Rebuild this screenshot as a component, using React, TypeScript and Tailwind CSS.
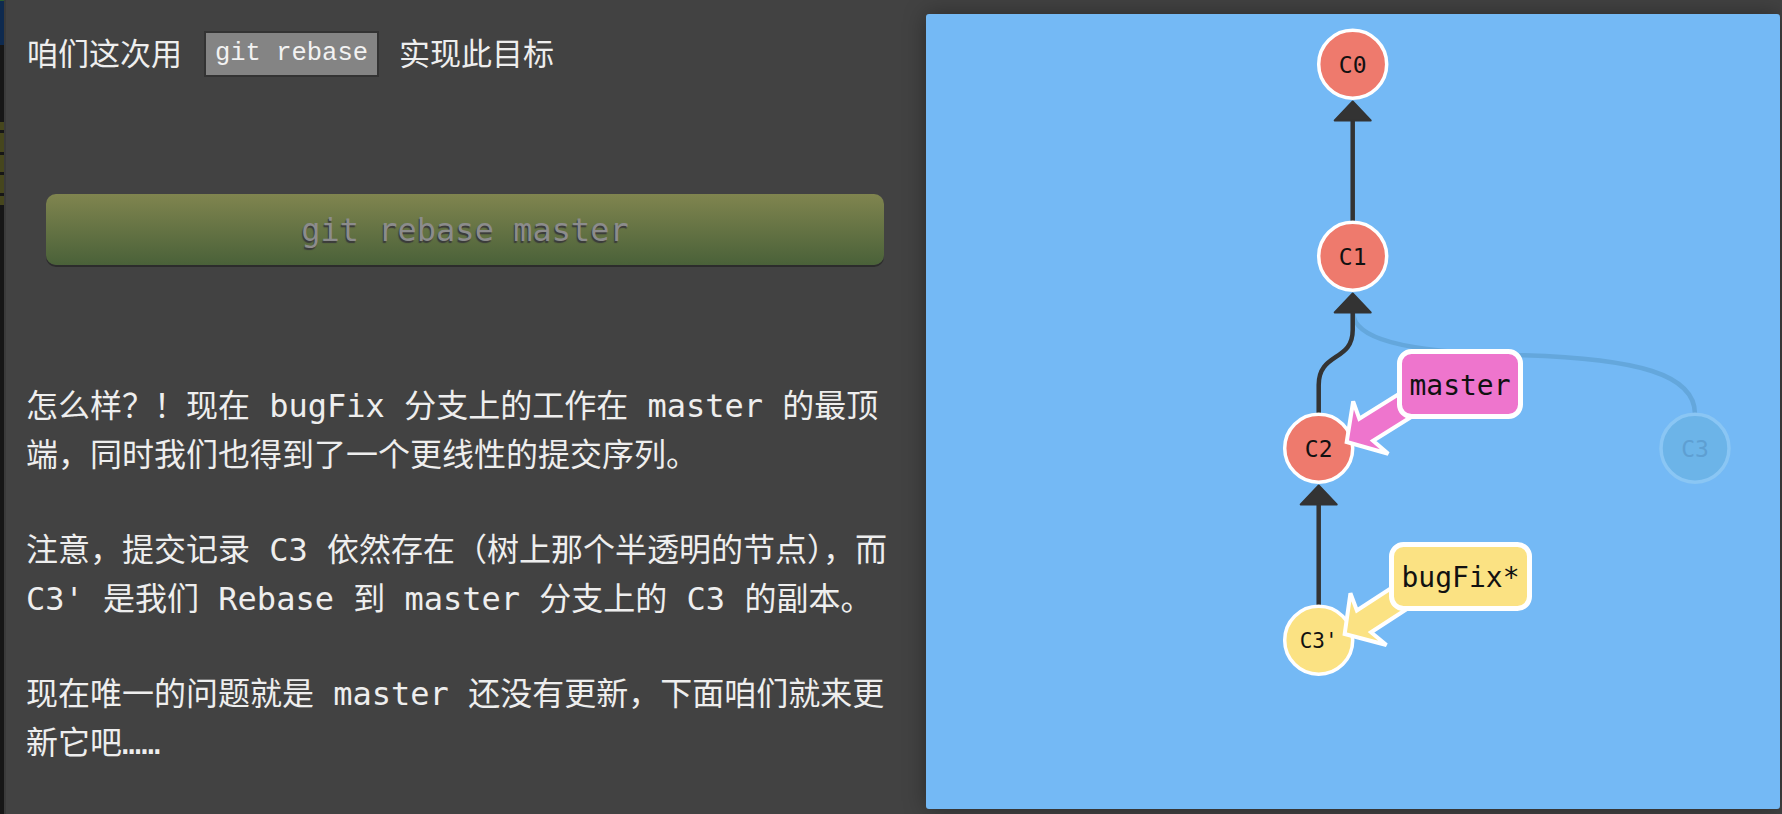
import type { ReactNode } from 'react'

const MONO = "'DejaVu Sans Mono', monospace"

function SideStrip() {
  return (
    <div className="flex w-[6px] shrink-0 border-r-2 border-[#3a3a3a]">
      <div className="flex w-[4px] flex-col bg-[#161616]">
        <div className="h-[1px] bg-[#2c5e2e]" />
        <div className="h-[44px] bg-[#0e2a4f]" />
        <div className="mt-[77px] flex flex-col gap-[3px]">
          <div className="h-[8px] bg-[#46461d]" />
          <div className="h-[19px] bg-[#46461d]" />
          <div className="h-[17px] bg-[#46461d]" />
          <div className="h-[18px] bg-[#46461d]" />
          <div className="h-[9px] bg-[#46461d]" />
        </div>
      </div>
    </div>
  )
}

function Para({ children, className = '' }: { children: ReactNode; className?: string }) {
  return (
    <p className={`whitespace-nowrap text-[32px] leading-[49px] ${className}`}>{children}</p>
  )
}

function Node({
  x,
  y,
  label,
  fill,
  size = 23,
  ring = '#ffffff',
  ink = '#111111',
}: {
  x: number
  y: number
  label: string
  fill: string
  size?: number
  ring?: string
  ink?: string
}) {
  return (
    <g>
      <circle cx={x} cy={y} r={34} fill={fill} stroke={ring} strokeWidth={3.5} />
      <text
        x={x}
        y={y + 1}
        textAnchor="middle"
        dominantBaseline="central"
        fontFamily={MONO}
        fontSize={size}
        fill={ink}
      >
        {label}
      </text>
    </g>
  )
}

function Head({ x, tip }: { x: number; tip: number }) {
  return (
    <path
      d={`M${x} ${tip} L${x + 18} ${tip + 19} L${x - 18} ${tip + 19} Z`}
      fill="#333333"
      stroke="#333333"
      strokeWidth={2}
      strokeLinejoin="round"
    />
  )
}

// branch tag: arrow pointing at the commit plus the rounded name box
function Tag({
  tipX,
  tipY,
  angle,
  box,
  label,
  fill,
}: {
  tipX: number
  tipY: number
  angle: number
  box: { x: number; y: number; w: number; h: number }
  label: string
  fill: string
}) {
  return (
    <g>
      <path
        d="M2 0 L29 -31 L25 -13 L100 -13 L100 13 L25 13 L31 32 Z"
        transform={`translate(${tipX} ${tipY}) rotate(${angle})`}
        fill={fill}
        stroke="#ffffff"
        strokeWidth={4}
        strokeLinejoin="miter"
      />
      <rect
        x={box.x}
        y={box.y}
        width={box.w}
        height={box.h}
        rx={12}
        fill={fill}
        stroke="#ffffff"
        strokeWidth={5}
      />
      <text
        x={box.x + box.w / 2}
        y={box.y + box.h / 2 + 1}
        textAnchor="middle"
        dominantBaseline="central"
        fontFamily={MONO}
        fontSize={28}
        fill="#111111"
      >
        {label}
      </text>
    </g>
  )
}

function Graph() {
  return (
    <svg className="block h-full w-full" viewBox="926 14 854 795">
      <path
        d="M1353 312 C1353 338 1400 352 1515 355 C1640 358 1695 375 1695 414"
        fill="none"
        stroke="#64a7dc"
        strokeWidth={4.5}
      />
      <path d="M1352.7 119 L1352.7 222" stroke="#333333" strokeWidth={4.5} />
      <path
        d="M1318.7 413 L1318.7 385 C1318.7 352 1352.7 362 1352.7 330 L1352.7 311"
        fill="none"
        stroke="#333333"
        strokeWidth={4.5}
      />
      <path d="M1318.7 503 L1318.7 606" stroke="#333333" strokeWidth={4.5} />

      <Head x={1352.7} tip={101.5} />
      <Head x={1352.7} tip={293.5} />
      <Head x={1318.7} tip={485.5} />

      <Node x={1352.7} y={64.3} label="C0" fill="#ee7a6d" />
      <Node x={1352.7} y={256.3} label="C1" fill="#ee7a6d" />
      <Node x={1318.7} y={448.3} label="C2" fill="#ee7a6d" />
      <Node x={1318.7} y={640.3} label="C3'" fill="#fbe283" size={21} />
      <Node
        x={1695}
        y={448.3}
        label="C3"
        fill="#6cb4e8"
        ring="#8ac6f4"
        ink="#5e9fd2"
      />

      <Tag
        tipX={1345}
        tipY={443}
        angle={-32}
        box={{ x: 1399.5, y: 351.5, w: 121, h: 65 }}
        label="master"
        fill="#ee75cd"
      />
      <Tag
        tipX={1343}
        tipY={635}
        angle={-33}
        box={{ x: 1391.5, y: 544.5, w: 138, h: 64 }}
        label="bugFix*"
        fill="#fbe283"
      />
    </svg>
  )
}

export default function App() {
  return (
    <div className="flex h-[814px] w-[1782px] overflow-hidden bg-[#424242] font-['DejaVu_Sans_Mono','Noto_Sans_CJK_SC',monospace] text-[#eeeeee]">
      <SideStrip />

      <div className="flex w-[920px] shrink-0 flex-col pl-[20px]">
        <div className="mt-[31px] flex h-[46px] items-center pl-[1px] text-[31px]">
          <span>咱们这次用</span>
          <code className="ml-[22px] mr-[20px] flex h-[46px] items-center border-2 border-[#333333] bg-[#848484] px-[9px] text-[25.5px] text-[#f2f2f2]">
            git rebase
          </code>
          <span>实现此目标</span>
        </div>

        <button className="ml-[20px] mt-[117px] h-[71px] w-[838px] rounded-[10px] bg-gradient-to-b from-[#80854f] to-[#4a6139] text-[32px] text-[#8c8c8c] shadow-[0_2px_0_#2c2c2c] [text-shadow:-1px_2px_1px_#3a3a3a]">
          git rebase master
        </button>

        <Para className="mt-[117px]">
          怎么样？！现在 bugFix 分支上的工作在 master 的最顶
          <br />
          端，同时我们也得到了一个更线性的提交序列。
        </Para>
        <Para className="mt-[46px]">
          注意，提交记录 C3 依然存在（树上那个半透明的节点），而
          <br />
          C3' 是我们 Rebase 到 master 分支上的 C3 的副本。
        </Para>
        <Para className="mt-[46px]">
          现在唯一的问题就是 master 还没有更新，下面咱们就来更
          <br />
          新它吧……
        </Para>
      </div>

      <div className="flex-1 pb-[5px] pr-[2px] pt-[14px]">
        <div className="h-full rounded-[3px] bg-[#74b9f5] shadow-[0_0_22px_rgba(0,0,0,0.35)]">
          <Graph />
        </div>
      </div>
    </div>
  )
}
